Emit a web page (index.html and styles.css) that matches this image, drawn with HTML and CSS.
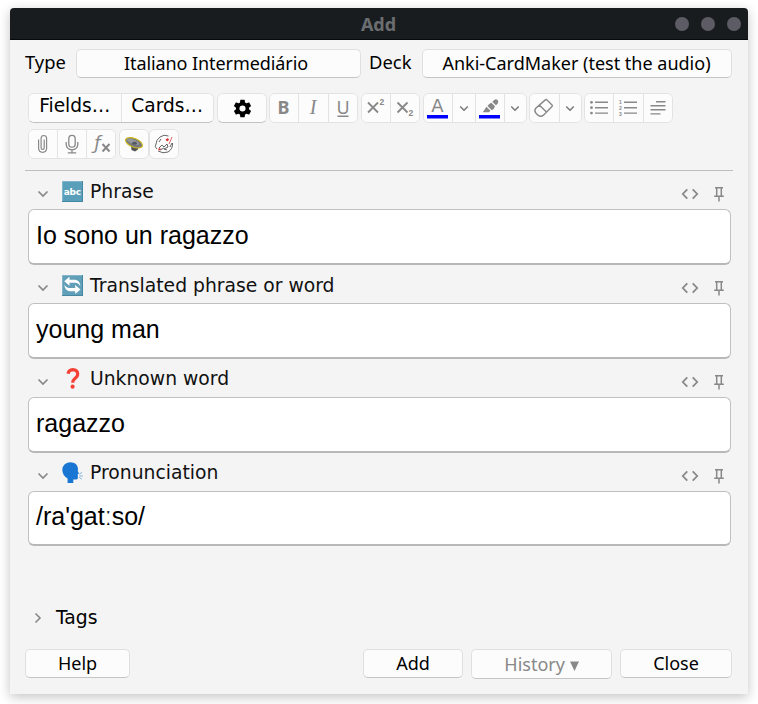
FILE: index.html
```html
<!DOCTYPE html>
<html lang="en">
<head>
<meta charset="utf-8">
<title>Add</title>
<link rel="stylesheet" href="styles.css">
</head>
<body>
<svg width="0" height="0" class="defs">
  <symbol id="down" viewBox="0 0 12 8"><path d="M1.500 1.500 6 6l4.500-4.500" fill="none" stroke="currentColor" stroke-width="1.700"/></symbol>
  <symbol id="code" viewBox="0 0 18 12"><path d="M6.300 1.300 1.800 6l4.500 4.700M11.700 1.300 16.200 6l-4.500 4.700" fill="none" stroke="currentColor" stroke-width="1.800"/></symbol>
  <symbol id="pin" viewBox="0 0 12 16"><path d="M2 1.700h8M3.700 2v7.600M8.300 2v7.600M1.200 10.300h9.600M6 10V15.500" fill="none" stroke="currentColor" stroke-width="1.500"/></symbol>
</svg>
<div class="window">
  <header class="titlebar"><span></span><h1>Add</h1><div class="dots"><i></i><i></i><i></i></div></header>
  <div class="chooser">
    <span class="lab type">Type</span><button class="btn model"><span>Italiano Intermediário</span></button>
    <span class="lab deck">Deck</span><button class="btn deckname"><span>Anki-CardMaker (test the audio)</span></button>
  </div>
  <div class="toolbar">
    <div class="row">
      <div class="group wide"><button class="cell">Fields…</button><button class="cell">Cards…</button></div>
      <div class="group gear"><button class="cell"><svg width="21" height="21" viewBox="0 0 24 24"><path d="M12,15.5A3.5,3.5 0 0,1 8.500,12A3.5,3.5 0 0,1 12,8.500A3.5,3.5 0 0,1 15.5,12A3.5,3.5 0 0,1 12,15.5M19.430,12.970C19.470,12.650 19.5,12.330 19.5,12C19.5,11.670 19.470,11.340 19.430,11L21.540,9.370C21.730,9.220 21.780,8.950 21.660,8.730L19.660,5.270C19.540,5.050 19.270,4.960 19.050,5.050L16.560,6.050C16.040,5.660 15.5,5.320 14.870,5.070L14.5,2.420C14.460,2.180 14.250,2 14,2H10C9.750,2 9.540,2.180 9.500,2.420L9.130,5.070C8.500,5.320 7.960,5.660 7.440,6.050L4.950,5.050C4.730,4.960 4.460,5.050 4.340,5.270L2.340,8.730C2.210,8.950 2.270,9.220 2.460,9.370L4.570,11C4.530,11.340 4.500,11.670 4.500,12C4.500,12.330 4.530,12.650 4.570,12.970L2.460,14.630C2.270,14.780 2.210,15.050 2.340,15.270L4.340,18.730C4.460,18.950 4.730,19.030 4.950,18.950L7.440,17.940C7.960,18.340 8.500,18.680 9.130,18.930L9.500,21.580C9.540,21.820 9.750,22 10,22H14C14.250,22 14.460,21.820 14.5,21.580L14.870,18.930C15.5,18.670 16.040,18.340 16.560,17.940L19.050,18.950C19.270,19.030 19.540,18.950 19.660,18.730L21.660,15.270C21.780,15.050 21.730,14.780 21.540,14.630L19.430,12.970Z"/></svg></button></div>
      <div class="group three">
        <button class="cell"><svg class="ic" viewBox="0 0 28 28"><text x="13.500" y="20" class="t bold">B</text></svg></button>
        <button class="cell"><svg class="ic" viewBox="0 0 28 28"><text x="14" y="20" class="t ital">I</text></svg></button>
        <button class="cell"><svg class="ic" viewBox="0 0 28 28"><text x="14" y="19.500" class="t under">U</text><path d="M8.500 22.200h11" stroke="#888" stroke-width="1.500"/></svg></button>
      </div>
      <div class="group two">
        <button class="cell"><svg class="ic" viewBox="0 0 28 28"><path d="m6 8.500 10 10M16 8.500l-10 10" stroke="#888" stroke-width="1.800"/><text x="19.800" y="10.500" class="t sm">2</text></svg></button>
        <button class="cell"><svg class="ic" viewBox="0 0 28 28"><path d="m6.500 8.500 10 10M16.500 8.500l-10 10" stroke="#888" stroke-width="1.800"/><text x="19.800" y="21.500" class="t sm">2</text></svg></button>
      </div>
      <div class="group color">
        <button class="cell"><svg class="ic" viewBox="0 0 28 28"><text x="13.500" y="18" class="t colorA">A</text><path d="M3 21h21v3.500H3z" fill="#00f"/></svg></button>
        <button class="cell arrow"><svg width="10" height="7"><use href="#down"/></svg></button>
        <button class="cell"><svg class="ic" viewBox="0 0 28 28"><path d="M16.300 7.800l1.900-1.900q1.900-1.200 3.300.2t.3 3.300l-1.900 1.900zM15.400 8.700l3.600 3.500q-.8 2.800-3.200 4l-4.300-4.200q1.400-2.400 3.900-3.300M10.400 12.700l4.100 4-1.600 1.600H6.800z" fill="#888"/><path d="M3 21h21v3.500H3z" fill="#00f"/></svg></button>
        <button class="cell arrow"><svg width="10" height="7"><use href="#down"/></svg></button>
      </div>
      <div class="group erase">
        <button class="cell"><svg class="ic" viewBox="0 0 28 28"><path d="M15.300 5.900Q16.100 5.100 17 5.900l5 5q.8.9 0 1.700l-8.800 8.800q-2.600 1.700-5 0l-2.400-2.400q-1.800-2.400 0-4.800zM9.500 11.300l7.200 7" fill="none" stroke="#888" stroke-width="1.400"/></svg></button>
        <button class="cell arrow"><svg width="10" height="7"><use href="#down"/></svg></button>
      </div>
      <div class="group three">
        <button class="cell"><svg class="ic" viewBox="0 0 28 28"><path d="M10 8.300h13M10 13.700h13M10 19.100h13" stroke="#888" stroke-width="1.400"/><g fill="#888"><circle cx="6.500" cy="8.300" r="1.400"/><circle cx="6.500" cy="13.700" r="1.400"/><circle cx="6.500" cy="19.100" r="1.400"/></g></svg></button>
        <button class="cell"><svg class="ic" viewBox="0 0 28 28"><path d="M10 8.300h13M10 13.700h13M10 19.100h13" stroke="#888" stroke-width="1.400"/><text x="6.500" y="9.500" class="t num">1</text><text x="6.500" y="15.500" class="t num">2</text><text x="6.500" y="21.500" class="t num">3</text></svg></button>
        <button class="cell"><svg class="ic" viewBox="0 0 28 28"><path d="M12 7.700h9.500M6.500 11.800h15M6.500 15.800h15M6.500 19.900h10" stroke="#888" stroke-width="1.400"/></svg></button>
      </div>
    </div>
    <div class="row">
      <div class="group three low">
        <button class="cell"><svg class="ic" viewBox="0 0 28 28"><path d="M9.600 9.500v9q.3 3.600 4 3.800 3.800-.2 4-3.800V8.200q-.2-2.600-2.800-2.700-2.500.1-2.700 2.700v9.600q0 1.600 1.600 1.700 1.500-.1 1.500-1.700V9.500" fill="none" stroke="#888" stroke-width="1.200"/></svg></button>
        <button class="cell"><svg class="ic" viewBox="0 0 28 28"><g fill="none" stroke="#888" stroke-width="1.300"><rect x="10.800" y="5.300" width="6.400" height="11.800" rx="3.200"/><path d="M8.200 12v2.800q.5 4.800 5.800 5 5.300-.2 5.800-5V12M14 20v2.700M9.800 22.800h8.400"/></g></svg></button>
        <button class="cell"><svg class="ic" viewBox="0 0 28 28"><text x="10.500" y="19" class="t fn">ƒ</text><path d="m15.500 14 7 7.500M22.500 14l-7 7.500" stroke="#888" stroke-width="2"/></svg></button>
      </div>
      <div class="group one"><button class="cell"><svg class="ic" viewBox="0 0 28 28"><path d="M11 16h7v3.500l-3 2-3.500-1.500z" fill="#555"/><ellipse cx="14" cy="12.800" rx="9" ry="4.300" transform="rotate(22 14 12.800)" fill="#75787d" stroke="#d0b91c" stroke-width="1.200"/><ellipse cx="13" cy="11.800" rx="6.500" ry="2.300" transform="rotate(22 13 11.800)" fill="#94979c"/><ellipse cx="14.500" cy="13.200" rx="2.600" ry="1.500" fill="#54575c"/></svg></button></div>
      <div class="group one tight"><button class="cell"><svg class="ic" viewBox="0 0 28 28"><g fill="none" stroke="#555" stroke-width=".9"><path d="M18.500 6Q14 4 10 7t-4 7Q4 17 7 19M8 21q5 3 10 1 5-3 4.500-9M9 18l3-3 2 2 3-3 1 3-4 2 3 1M10 20l4-2M11 9l-2 3M20 17l2-4"/></g><path d="m15.500 9.500 2.500-1.500 1 2-2 1.500zM8 19l2-1 1 1.500-2 1z" fill="#d33"/><path d="m19 14 3-7" stroke="#d66" stroke-width="1"/></svg></button></div>
    </div>
  </div>
  <main class="fields">
    <section>
      <div class="head"><svg class="chev" width="12" height="8"><use href="#down"/></svg>
        <svg class="emoji" viewBox="0 0 21 21"><path d="M0 0h21v21H0z" fill="#4288a3"/><path d="M0 0h20v20H0z" fill="#5a9fb9"/><path d="M0 0h20v.8H.8V20H0z" fill="#8bbdcf"/><text x="10.200" y="13.500" class="abc">abc</text></svg>
        <h2>Phrase</h2><svg class="code" width="18" height="12"><use href="#code"/></svg><svg class="pin" width="12" height="16"><use href="#pin"/></svg></div>
      <div class="value">Io sono un ragazzo</div>
    </section>
    <section>
      <div class="head"><svg class="chev" width="12" height="8"><use href="#down"/></svg>
        <svg class="emoji" viewBox="0 0 21 21"><path d="M0 0h21v21H0z" fill="#4288a3"/><path d="M0 0h20v20H0z" fill="#609fb7"/><path d="M0 0h20v.8H.8V20H0z" fill="#8bbdcf"/><path d="m2.200 6.300 5.300-4.500V4.700h5.700q5 .7 5.100 6.700-1.500-3.400-5.100-3.600H7.500v3zM18.500 14.600l-5.300 4.500v-2.900H7.500q-5-.7-5.100-6.700 1.500 3.400 5.100 3.600h5.700v-3z" fill="#fff"/></svg>
        <h2>Translated phrase or word</h2><svg class="code" width="18" height="12"><use href="#code"/></svg><svg class="pin" width="12" height="16"><use href="#pin"/></svg></div>
      <div class="value">young man</div>
    </section>
    <section class="raised">
      <div class="head"><svg class="chev" width="12" height="8"><use href="#down"/></svg>
        <svg class="emoji" viewBox="0 0 21 21"><path d="M6 5.700Q6.800 1.800 10.700 1.700q5 .3 5 4.400 0 2.500-3 4.700-2 1.600-2 4" fill="none" stroke="#f44336" stroke-width="3.200"/><circle cx="10.600" cy="18.700" r="2.100" fill="#f44336"/></svg>
        <h2>Unknown word</h2><svg class="code" width="18" height="12"><use href="#code"/></svg><svg class="pin" width="12" height="16"><use href="#pin"/></svg></div>
      <div class="value">ragazzo</div>
    </section>
    <section class="raised">
      <div class="head"><svg class="chev" width="12" height="8"><use href="#down"/></svg>
        <svg class="emoji" viewBox="0 0 21 21"><path d="M5.600 21V16.500Q.2 13 .3 7.700.8.800 8 .2q7-.2 8 6.200l-.2 2.700 1.200 2.500-1.300.7.200 3.700q-.2 1.600-2 1.600l-2.600-.2V21z" fill="#1976d2"/><path d="m17.300 12.200 2.800-1.900M17.500 14h3.300M17.200 15.300l2.600 1.800" stroke="#7fb2df" stroke-width="1"/></svg>
        <h2>Pronunciation</h2><svg class="code" width="18" height="12"><use href="#code"/></svg><svg class="pin" width="12" height="16"><use href="#pin"/></svg></div>
      <div class="value">/ra'gatːso/</div>
    </section>
  </main>
  <div class="tags"><svg width="8" height="12" viewBox="0 0 8 12"><path d="m1.500 1.500 4.500 4.500-4.500 4.500" fill="none" stroke="#888" stroke-width="1.600"/></svg><span>Tags</span></div>
  <footer><button class="btn help"><span>Help</span></button><button class="btn add"><span>Add</span></button><button class="btn history"><span>History <svg width="9" height="10" viewBox="0 0 9 10"><path d="M0 .5h9L4.500 10z" fill="#888"/></svg></span></button><button class="btn close"><span>Close</span></button></footer>
</div>
</body>
</html>
```
FILE: styles.css
```css
* { box-sizing: border-box; }
body { margin: 0; height: 704px; overflow: hidden; background: #fff; padding: 8px 10px 10px; }
.defs { display: none; }
button { margin: 0; padding: 0; font: inherit; color: inherit; border: 0; background: #fcfcfc; }
.window {
  height: 686px; background: #f4f4f4; border-radius: 4px 4px 0 0;
  box-shadow: 0 3px 12px rgba(0,0,0,.24);
  display: flex; flex-direction: column;
  font-family: "Noto Sans", sans-serif; font-size: 18px; color: #000;
}
.titlebar {
  height: 32px; background: #191c1f; border-bottom: 1px solid #08090a; border-radius: 4px 4px 0 0;
  display: grid; grid-template-columns: 1fr auto 1fr; align-items: center; padding: 0 7px 0 6px;
}
.titlebar h1 { margin: 0; font-size: 18px; line-height: 30px; color: #6b6e70; }
.dots { display: flex; justify-content: flex-end; gap: 12px; }
.dots i { width: 14px; height: 14px; border-radius: 50%; background: #5d5c64; }
.chooser { height: 53px; padding: 9px 16px 0 15px; display: flex; }
.lab { line-height: 26px; font-size: 18.400px; }
.type { width: 51px; }
.deck { width: 53px; margin-left: 8px; }
.btn {
  height: 29px; border: 1px solid #dfdfdf; border-bottom-color: #c4c4c4; border-radius: 5px;
  display: flex; justify-content: center; align-items: center; line-height: 27px; white-space: nowrap;
}
.model { width: 285px; padding-right: 5px; letter-spacing: -.08px; }
.deckname { flex: 1; padding-right: 1px; }
.toolbar { height: 78px; margin: 0 15px; padding-left: 3px; border-bottom: 1px solid #bfbfbf; }
.row { display: flex; gap: 3px; height: 36px; }
.group { display: flex; height: 30px; border: 1px solid #e3e3e3; border-radius: 6px; background: #fcfcfc; overflow: hidden; }
.cell { flex: 1; min-width: 0; display: flex; align-items: center; justify-content: center; color: #777; }
.cell + .cell { border-left: 1px solid #e3e3e3; }
.wide { width: 186px; border-bottom-color: #c2c2c2; }
.wide .cell { color: #000; font: 18.600px/24px "DejaVu Sans", sans-serif; padding-bottom: 4px; }
.gear { width: 50px; margin-right: -1px; border-bottom-color: #c2c2c2; }
.three { width: 89px; }
.low { width: 88px; }
.two { width: 59px; }
.color { width: 104px; margin-right: -1px; }
.erase { width: 53px; margin-right: -1px; }
.one { width: 30px; }
.tight { margin-left: -3px; }
.arrow { flex: 0 0 22.500px; }
.ic { width: 28px; height: 28px; flex: none; }
.t { fill: #888; text-anchor: middle; font-family: "Noto Sans", sans-serif; }
.bold { font-size: 18px; font-weight: 700; }
.ital { font: italic 20px "Liberation Serif", serif; }
.under { font-size: 18px; }
.sm { font: 700 8.500px "Liberation Sans", sans-serif; }
.colorA { font: 18px "DejaVu Sans", sans-serif; }
.num { font: 700 5px "Liberation Sans", sans-serif; }
.fn { font: italic 18px "DejaVu Sans", sans-serif; }
.fields { height: 414px; padding: 0 17px 0 18px; color: #888; }
section { height: 94px; }
.head { height: 38px; display: flex; align-items: center; padding: 4px 6px 0 9px; }
.chev { margin-top: 4px; }
.emoji { width: 21px; height: 21px; margin: -2px 0 0 13px; flex: none; }
.abc { fill: #fff; font: 700 9px "DejaVu Sans", sans-serif; text-anchor: middle; letter-spacing: -.3px; }
h2 { margin: 0 auto 0 7px; font: 18.750px/24px "DejaVu Sans", sans-serif; color: #111; }
.raised h2 { padding-bottom: 2px; }
.raised .emoji { margin-top: -3px; }
.code { margin-top: 4px; }
.pin { margin: 4px 0 0 14px; }
.value {
  height: 56px; border: 1px solid #c0c0c0; border-bottom: 2px solid #b8b8b8; border-radius: 6px; background: #fff;
  color: #000; font: 25px/51px "Liberation Sans", sans-serif; padding-left: 7px;
}
section:last-child .value { height: 55px; line-height: 49px; }
.tags { margin-top: 10px; height: 46px; padding-left: 24px; display: flex; align-items: center; gap: 14px; font: 18.750px/24px "DejaVu Sans", sans-serif; }
footer { display: flex; padding: 8px 16px 0 15px; }
.help { width: 105px; margin-right: auto; }
.add { width: 100px; }
.history { width: 141px; height: 30px; margin: 0 8px; color: #888; }
.close { width: 112px; }
```
